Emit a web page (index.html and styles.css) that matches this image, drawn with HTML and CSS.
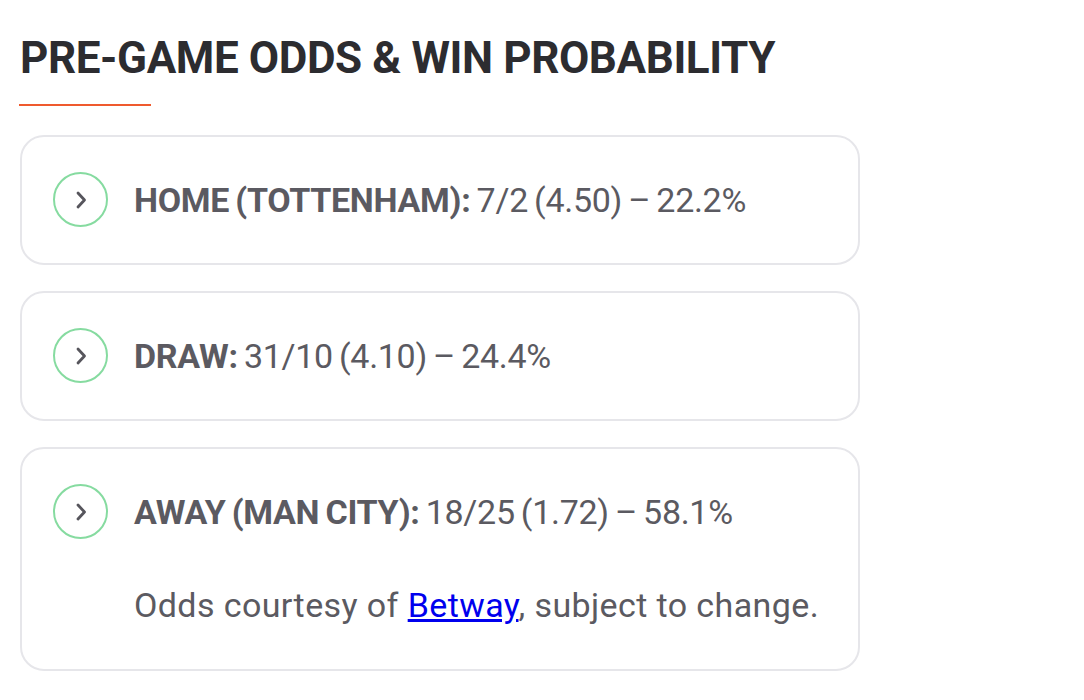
FILE: index.html
```html
<!DOCTYPE html>
<html>
<head>
<meta charset="utf-8">
<link rel="stylesheet" href="styles.css">
</head>
<body>
<section class="odds">
  <h2 class="odds-title">PRE-GAME ODDS &amp; WIN PROBABILITY</h2>
  <div class="odds-rule"></div>
  <div class="odds-list">
    <div class="odds-card">
      <div class="odds-row">
        <span class="odds-icon"><svg viewBox="0 0 12 20" width="12" height="20"><path d="M3 3 L9.5 10 L3 17" fill="none" stroke="#56555c" stroke-width="2.8" stroke-linecap="round" stroke-linejoin="round"/></svg></span>
        <p class="odds-text"><strong>HOME (TOTTENHAM):</strong> 7/2 (4.50) – 22.2%</p>
      </div>
    </div>
    <div class="odds-card">
      <div class="odds-row">
        <span class="odds-icon"><svg viewBox="0 0 12 20" width="12" height="20"><path d="M3 3 L9.5 10 L3 17" fill="none" stroke="#56555c" stroke-width="2.8" stroke-linecap="round" stroke-linejoin="round"/></svg></span>
        <p class="odds-text"><strong>DRAW:</strong> 31/10 (4.10) – 24.4%</p>
      </div>
    </div>
    <div class="odds-card">
      <div class="odds-row">
        <span class="odds-icon"><svg viewBox="0 0 12 20" width="12" height="20"><path d="M3 3 L9.5 10 L3 17" fill="none" stroke="#56555c" stroke-width="2.8" stroke-linecap="round" stroke-linejoin="round"/></svg></span>
        <p class="odds-text"><strong>AWAY (MAN CITY):</strong> 18/25 (1.72) – 58.1%</p>
      </div>
      <p class="odds-note">Odds courtesy of <a href="#">Betway</a>, subject to change.</p>
    </div>
  </div>
</section>
</body>
</html>
```
FILE: styles.css
```css
html, body {
  margin: 0;
  padding: 0;
  background: #ffffff;
}
body {
  font-family: Roboto, "Liberation Sans", sans-serif;
}
.odds {
  width: 840px;
  padding: 0 0 0 20px;
}
.odds-title {
  margin: 0;
  padding-top: 30px;
  font-size: 44px;
  line-height: 56px;
  font-weight: 700;
  color: #2c2c30;
  letter-spacing: -0.4px;
}
.odds-rule {
  width: 132px;
  height: 2px;
  background: #ef5a2e;
  margin: 18px 0 0 -1px;
}
.odds-list {
  display: flex;
  flex-direction: column;
  gap: 26px;
  margin-top: 29px;
}
.odds-card {
  border: 2px solid #e6e6ea;
  border-radius: 24px;
  padding: 35px 32px 36px 31px;
}
.odds-row {
  display: flex;
  align-items: center;
  gap: 26px;
}
.odds-icon {
  flex: none;
  width: 51px;
  height: 51px;
  border: 2px solid #86dba0;
  border-radius: 50%;
  display: flex;
  align-items: center;
  justify-content: center;
}
.odds-text {
  margin: 0;
  font-size: 34px;
  line-height: 40px;
  color: #5b5a61;
  letter-spacing: -0.3px;
  word-spacing: -2px;
}
.odds-text strong {
  font-weight: 700;
}
.odds-note {
  margin: 46px 0 8px 81px;
  font-size: 34px;
  line-height: 40px;
  color: #5b5a61;
  letter-spacing: 0.4px;
}
.odds-note a {
  color: #0000ee;
}
```
